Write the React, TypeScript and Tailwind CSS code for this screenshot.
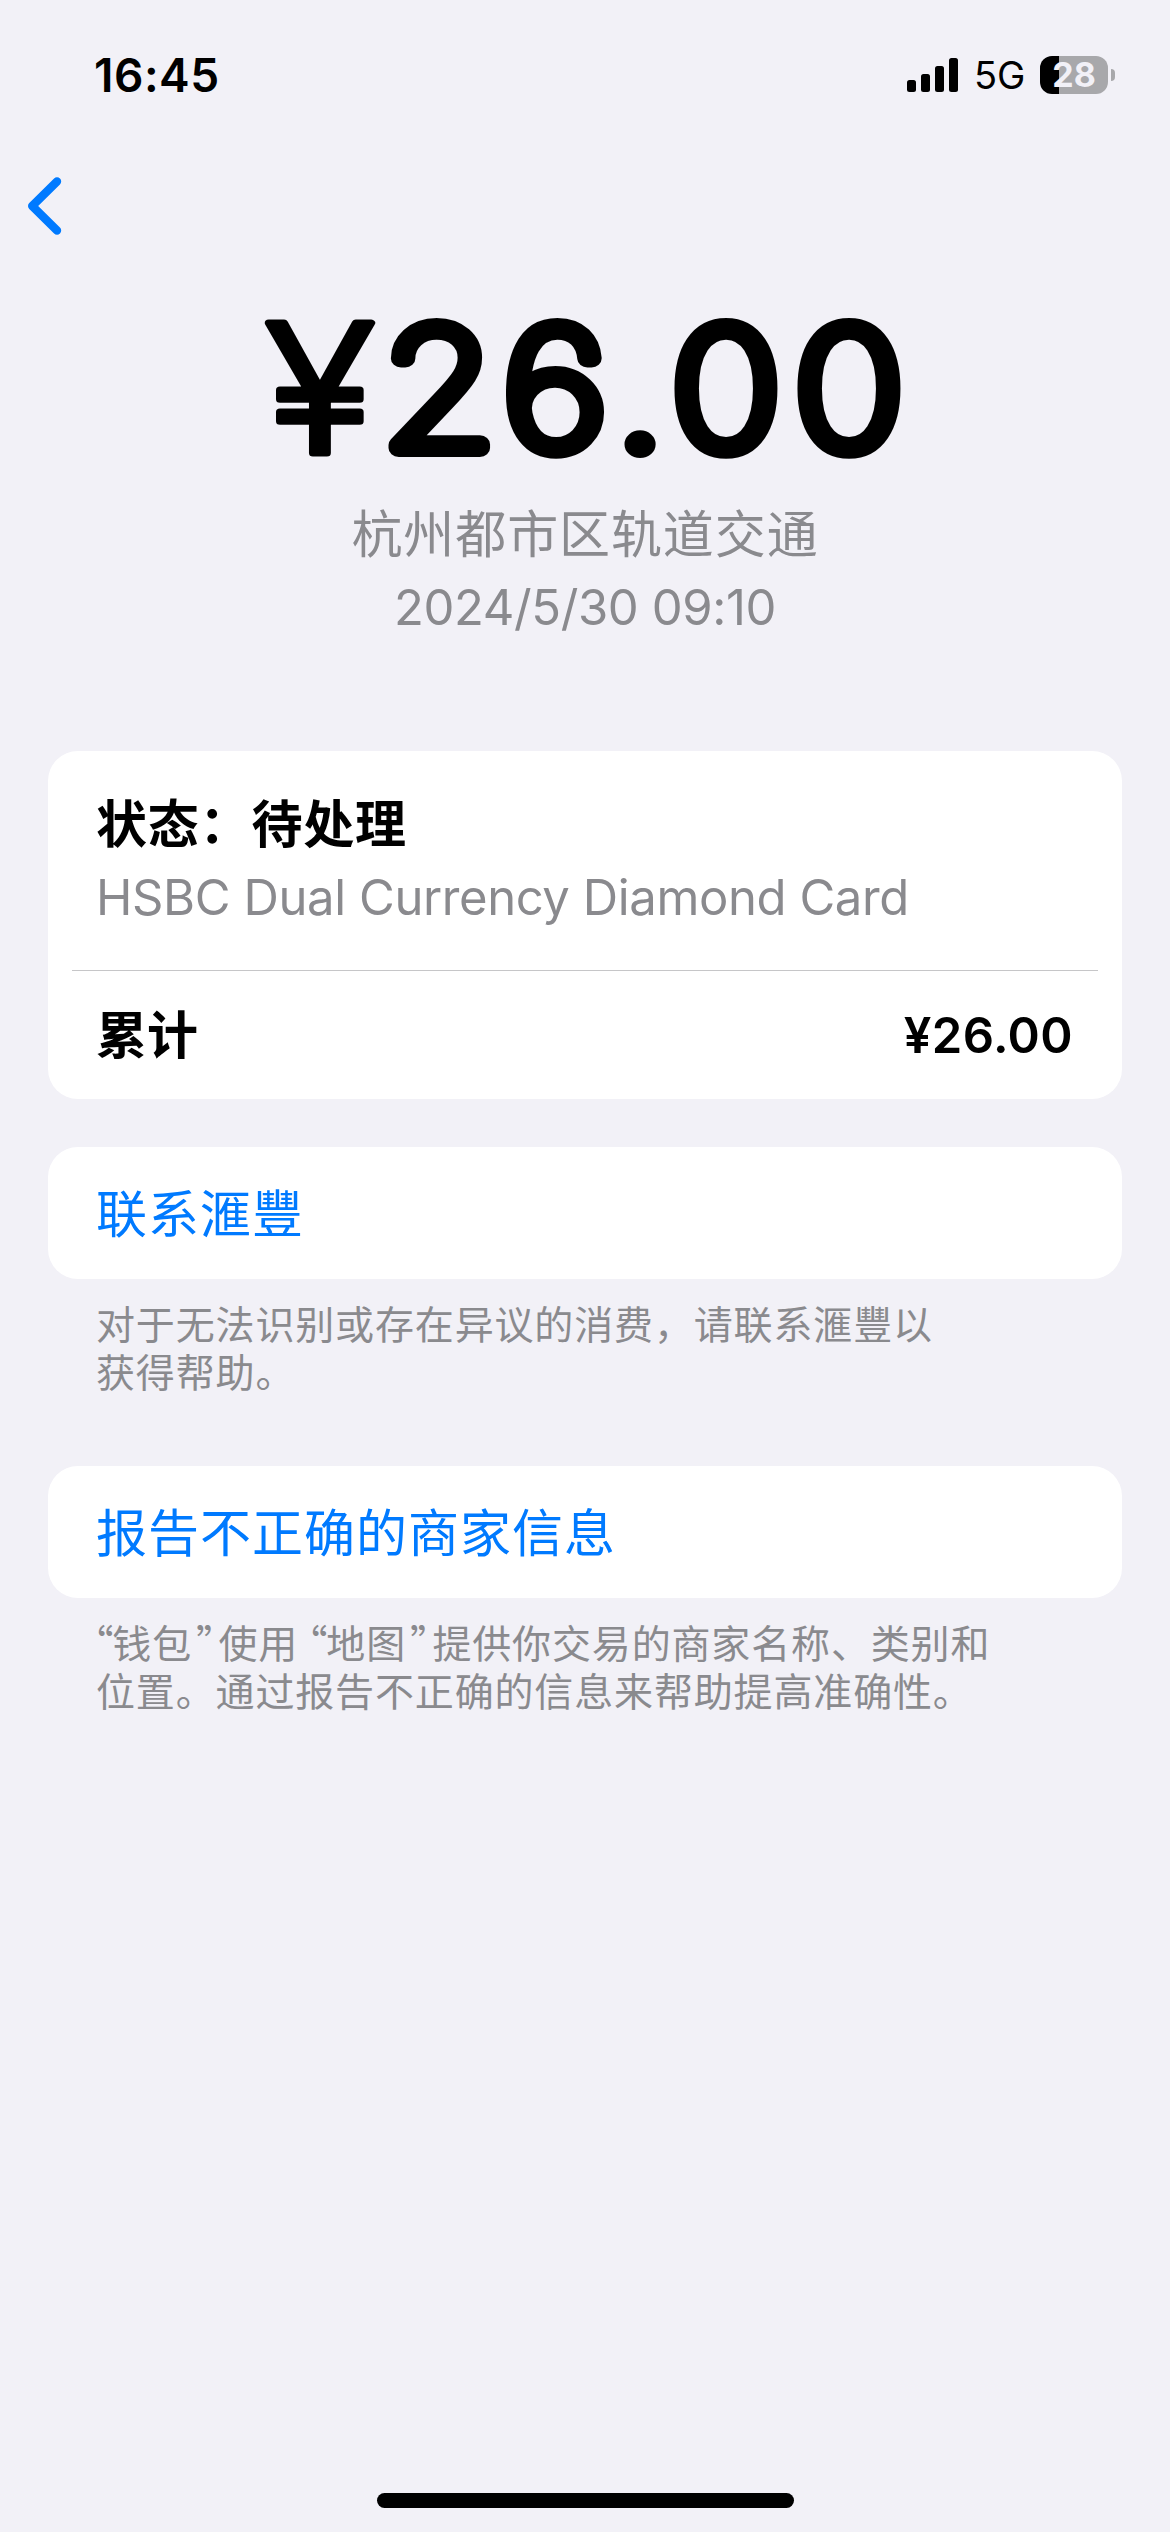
import type { ReactNode } from "react";

const stretch = 1.13;

function StatusBar() {
  return (
    <header className="flex h-[150px] shrink-0 items-center justify-between pr-[55px] pl-[94px]">
      <span className="text-[46px] leading-none font-semibold tracking-[0.5px]">16:45</span>
      <div className="flex items-center">
        <svg width="51" height="34" viewBox="0 0 51 34" fill="#000">
          <rect x="0" y="22" width="9" height="12" rx="2.5" />
          <rect x="14" y="16" width="9" height="18" rx="2.5" />
          <rect x="28" y="8" width="9" height="26" rx="2.5" />
          <rect x="42" y="0" width="9" height="34" rx="2.5" />
        </svg>
        <span className="ml-[16px] w-[66px] text-[38px] leading-none">5G</span>
        <div className="flex h-[38px] w-[68px] items-center justify-center rounded-[12px] bg-[linear-gradient(to_right,#000_19px,#a8a8ab_19px)] text-[34px] leading-none font-bold text-[#f2f1f7]">
          28
        </div>
        <div className="ml-[3px] h-[12px] w-[4px] rounded-r-full bg-[#a8a8ab]" />
      </div>
    </header>
  );
}

function BackButton() {
  return (
    <button className="ml-[26px] h-[60px] w-[40px] shrink-0">
      <svg width="40" height="60" viewBox="0 0 40 60" fill="none" stroke="#007aff" strokeWidth="8.4" strokeLinecap="round" strokeLinejoin="round">
        <path d="M31 5.5L6.2 30L31 54.5" />
      </svg>
    </button>
  );
}

function Amount() {
  const at = (...centers: number[]) => centers.map((c) => c / stretch).join(" ");
  return (
    <h1 className="h-[170px] shrink-0">
      <svg className="overflow-visible" width="1170" height="170" viewBox="0 300 1170 170" textAnchor="middle" stroke="#000" strokeLinejoin="round" strokeLinecap="round">
        <g transform={`scale(${stretch} 1)`}>
          <text x={at(320)} y="453" fontSize="179" fontWeight="300" strokeWidth="7">
            ¥
          </text>
          <g fontSize="164" fontWeight="100" strokeWidth="18">
            <text x={at(439, 555)} y="448">
              26
            </text>
            <text x={at(640)} y="455" fontWeight="500" strokeWidth="4">
              .
            </text>
            <text x={at(726, 849)} y="448">
              00
            </text>
          </g>
        </g>
      </svg>
    </h1>
  );
}

function Card({ children }: { children: ReactNode }) {
  return <section className="mx-[48px] rounded-[30px] bg-white">{children}</section>;
}

function LinkRow({ children }: { children: ReactNode }) {
  return (
    <Card>
      <a className="flex h-[132px] items-center pt-[2px] pl-[48px] text-[51px] leading-none tracking-[1px] text-[#007aff]">
        {children}
      </a>
    </Card>
  );
}

function Footnote({ children }: { children: ReactNode }) {
  return (
    <p className="mt-[22px] pl-[96px] text-[39px] leading-[48px] tracking-[0.85px] whitespace-nowrap text-[#8a8a8e]">
      {children}
    </p>
  );
}

function Quoted({ children }: { children: ReactNode }) {
  return (
    <>
      <span className="mr-[-2px] ml-[-2px] font-['Noto_Sans_CJK_SC'] leading-none [font-feature-settings:'halt']">“</span>
      {children}
      <span className="mr-[2px] ml-[4px] font-['Noto_Sans_CJK_SC'] leading-none [font-feature-settings:'halt']">”</span>
    </>
  );
}

export default function App() {
  return (
    <main
      lang="zh-CN"
      className="flex h-[2532px] w-[1170px] flex-col bg-[#f2f1f7] font-['Inter','Noto_Sans_CJK_SC',sans-serif] text-black"
    >
      <StatusBar />
      <div className="flex h-[150px] shrink-0 pt-[26px]">
        <BackButton />
      </div>
      <Amount />
      <div className="mt-[27px] text-center text-[#8a8a8e]">
        <p className="text-[51px] leading-[75px] tracking-[0.9px]">杭州都市区轨道交通</p>
        <p className="text-[49px] leading-[72px] tracking-[-0.4px]">2024/5/30 09:10</p>
      </div>
      <div className="mt-[107px]">
        <Card>
          <div className="h-[219px] pt-[36px] pl-[48px]">
            <p className="text-[51px] leading-[75px] font-semibold tracking-[0.8px]">状态：待处理</p>
            <p className="text-[49px] leading-[72px] tracking-[-0.4px] text-[#8a8a8e]">HSBC Dual Currency Diamond Card</p>
          </div>
          <div className="mx-[24px] h-px bg-[#c6c6c8]" />
          <div className="flex h-[128px] items-center justify-between pt-[1px] pr-[49px] pl-[48px] font-semibold">
            <span className="text-[51px] leading-none">累计</span>
            <span className="text-[49px] leading-none tracking-[0.4px]">¥26.00</span>
          </div>
        </Card>
      </div>
      <div className="mt-[48px]">
        <LinkRow>联系滙豐</LinkRow>
        <Footnote>
          对于无法识别或存在异议的消费，请联系滙豐以
          <br />
          获得帮助。
        </Footnote>
      </div>
      <div className="mt-[69px]">
        <LinkRow>报告不正确的商家信息</LinkRow>
        <Footnote>
          <Quoted>钱包</Quoted>使用 <Quoted>地图</Quoted>提供你交易的商家名称、类别和
          <br />
          位置。通过报告不正确的信息来帮助提高准确性。
        </Footnote>
      </div>
      <div className="mx-auto mt-auto mb-[24px] h-[15px] w-[417px] rounded-full bg-black" />
    </main>
  );
}
